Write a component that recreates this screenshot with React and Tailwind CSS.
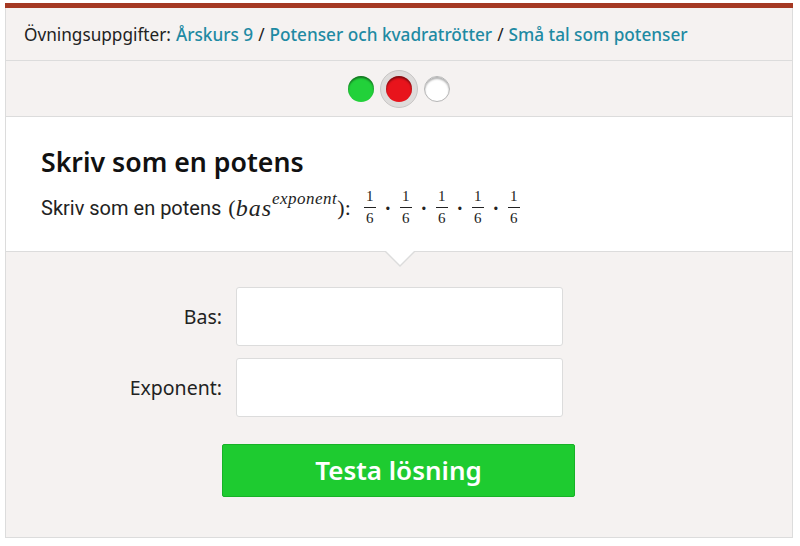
export default function App() {
    const frac = (
        <span className="inline-flex flex-col items-center leading-none text-[15px] w-[12px]">
            <span>1</span>
            <span className="w-full h-px bg-[#222] my-[3px]" />
            <span>6</span>
        </span>
    );
    const dot = <span className="w-[24px] text-center text-[20px] font-bold">·</span>;

    return (
        <div className="pt-[3px] pl-[5px] bg-white min-h-[546px]">
            <div className="w-[788px] border-x border-b border-[#dcdcdc] bg-[#f5f2f1] font-['Noto_Sans',sans-serif]">
                <div className="h-[5px] bg-[#a53923] -mx-px" />

                {/* Breadcrumb */}
                <div className="h-[53px] border-b border-[#dcdcdc] flex items-center pl-[18px] pt-[2px] text-[17.2px] text-[#222]">
                    <span>Övningsuppgifter:</span>
                    <span className="text-[#1e8aa3] font-medium ml-[5px]">Årskurs 9</span>
                    <span className="mx-[5px]">/</span>
                    <span className="text-[#1e8aa3] font-medium">Potenser och kvadratrötter</span>
                    <span className="mx-[5px]">/</span>
                    <span className="text-[#1e8aa3] font-medium">Små tal som potenser</span>
                </div>

                {/* Progress dots */}
                <div className="h-[56px] border-b border-[#dcdcdc] flex items-center justify-center gap-[3px]">
                    <span className="w-[26px] h-[26px] rounded-full bg-[#22d13a] shadow-[inset_0_2px_2px_rgba(0,0,0,0.45)]" />
                    <span className="w-[38px] h-[38px] rounded-full bg-[#dedcdb] border border-[#c8c6c5] flex items-center justify-center mx-[3px]">
                        <span className="w-[26px] h-[26px] rounded-full bg-[#e8141c] shadow-[inset_0_2px_2px_rgba(0,0,0,0.45)]" />
                    </span>
                    <span className="w-[26px] h-[26px] rounded-full bg-white border border-[#b5b5b5] shadow-[inset_0_2px_2px_rgba(0,0,0,0.3)]" />
                </div>

                {/* Question */}
                <div className="relative bg-white h-[135px] border-b border-[#dcdcdc] pl-[35px] pt-[28px]">
                    <h1 className="text-[26.7px] font-semibold text-[#111] leading-[34px]">Skriv som en potens</h1>
                    <div className="mt-[10px] flex items-center text-[20px] text-[#222] font-['Roboto',sans-serif]">
                        <span>Skriv som en potens</span>
                        <span className="ml-[7px] font-['Liberation_Serif',serif] text-[22px]">(</span>
                        <span className="font-['Liberation_Serif',serif] italic text-[24px] tracking-[1px]">bas</span>
                        <span className="font-['Liberation_Serif',serif] italic text-[17px] tracking-[0.5px] -translate-y-[9px]">exponent</span>
                        <span className="font-['Liberation_Serif',serif] text-[22px]">):</span>
                        <span className="ml-[13px] flex items-center font-['Liberation_Serif',serif]">
                            {frac}{dot}{frac}{dot}{frac}{dot}{frac}{dot}{frac}
                        </span>
                    </div>
                    <div className="absolute left-[378px] -bottom-[16px] w-0 h-0 border-x-[16px] border-x-transparent border-t-[16px] border-t-[#dcdcdc]" />
                    <div className="absolute left-[379px] -bottom-[14px] w-0 h-0 border-x-[15px] border-x-transparent border-t-[15px] border-t-white" />
                </div>

                {/* Form */}
                <div className="pt-[35px] pb-[40px] text-[19.5px] text-[#222]">
                    <div className="flex items-center">
                        <label className="w-[216px] text-right">Bas:</label>
                        <div className="ml-[14px] w-[327px] h-[59px] bg-white border border-[#dcdcdc] rounded-[3px]" />
                    </div>
                    <div className="flex items-center mt-[12px]">
                        <label className="w-[216px] text-right">Exponent:</label>
                        <div className="ml-[14px] w-[327px] h-[59px] bg-white border border-[#dcdcdc] rounded-[3px]" />
                    </div>
                    <div className="ml-[216px] mt-[27px] w-[353px] h-[53px] rounded-[2px] bg-[#1ecb30] border border-[#17b227] flex items-center justify-center text-white text-[26px] font-semibold">
                        Testa lösning
                    </div>
                </div>
            </div>
        </div>
    );
}
